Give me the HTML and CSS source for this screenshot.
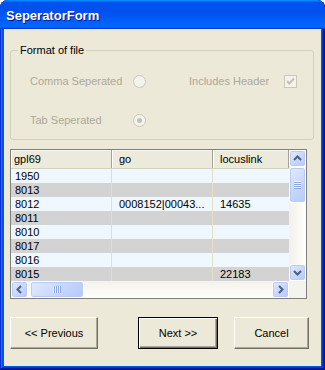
FILE: index.html
```html
<!DOCTYPE html>
<html>
<head>
<meta charset="utf-8">
<link rel="stylesheet" href="styles.css">
</head>
<body>
<div class="window">
  <div class="titlebar"><span class="title">SeperatorForm</span></div>
  <div class="frame">
    <div class="client">
      <fieldset class="group">
        <legend>Format of file</legend>
        <div class="options">
          <span class="lbl">Comma Seperated</span>
          <span class="radio"></span>
          <span></span>
          <span class="lbl">Includes Header</span>
          <span class="check"><svg width="11" height="11" viewBox="0 0 11 11"><path d="M2 5 L4.3 7.5 L9 2.5" fill="none" stroke="#c3c1b3" stroke-width="2"/></svg></span>
          <span class="lbl">Tab Seperated</span>
          <span class="radio on"><span class="dot"></span></span>
        </div>
      </fieldset>

      <div class="grid">
        <div class="table">
          <div class="row head"><div class="cell">gpl69</div><div class="cell">go</div><div class="cell">locuslink</div></div>
          <div class="row light"><div class="cell">1950</div><div class="cell"></div><div class="cell"></div></div>
          <div class="row dark"><div class="cell">8013</div><div class="cell"></div><div class="cell"></div></div>
          <div class="row light"><div class="cell">8012</div><div class="cell">0008152|00043...</div><div class="cell">14635</div></div>
          <div class="row dark"><div class="cell">8011</div><div class="cell"></div><div class="cell"></div></div>
          <div class="row light"><div class="cell">8010</div><div class="cell"></div><div class="cell"></div></div>
          <div class="row dark"><div class="cell">8017</div><div class="cell"></div><div class="cell"></div></div>
          <div class="row light"><div class="cell">8016</div><div class="cell"></div><div class="cell"></div></div>
          <div class="row dark"><div class="cell">8015</div><div class="cell"></div><div class="cell">22183</div></div>
        </div>
        <div class="vscroll">
          <span class="sbtn"><svg width="15" height="15" viewBox="0 0 15 15"><path d="M4 9 L7.5 5.5 L11 9" fill="none" stroke="#4d6185" stroke-width="2"/></svg></span>
          <span class="thumb vthumb"><svg width="15" height="8" viewBox="0 0 15 8"><path d="M4 0.5h7M4 2.5h7M4 4.5h7M4 6.5h7" stroke="#eef3fe" stroke-width="1"/><path d="M4 1.5h7M4 3.5h7M4 5.5h7M4 7.5h7" stroke="#8ca6e4" stroke-width="1"/></svg></span>
          <span class="track"></span>
          <span class="sbtn"><svg width="15" height="15" viewBox="0 0 15 15"><path d="M4 6 L7.5 9.5 L11 6" fill="none" stroke="#4d6185" stroke-width="2"/></svg></span>
        </div>
        <div class="hscroll">
          <span class="sbtn"><svg width="15" height="15" viewBox="0 0 15 15"><path d="M9 4 L5.5 7.5 L9 11" fill="none" stroke="#4d6185" stroke-width="2"/></svg></span>
          <span class="thumb hthumb"><svg width="8" height="15" viewBox="0 0 8 15"><path d="M0.5 4v7M2.5 4v7M4.5 4v7M6.5 4v7" stroke="#eef3fe" stroke-width="1"/><path d="M1.5 4v7M3.5 4v7M5.5 4v7M7.5 4v7" stroke="#8ca6e4" stroke-width="1"/></svg></span>
          <span class="track"></span>
          <span class="sbtn"><svg width="15" height="15" viewBox="0 0 15 15"><path d="M6 4 L9.5 7.5 L6 11" fill="none" stroke="#4d6185" stroke-width="2"/></svg></span>
        </div>
        <div class="corner"></div>
      </div>

      <div class="buttons">
        <button class="btn prev">&lt;&lt; Previous</button>
        <button class="btn next">Next &gt;&gt;</button>
        <button class="btn cancel">Cancel</button>
      </div>
    </div>
  </div>
</div>
</body>
</html>
```

FILE: styles.css
```css
html, body {
  margin: 0;
  padding: 0;
  background: #ffffff;
}

.window {
  width: 325px;
  height: 370px;
  box-sizing: border-box;
  display: flex;
  flex-direction: column;
  background: #0055e5;
  border-radius: 8px 8px 0 0;
  overflow: hidden;
  box-shadow: inset -1px -1px #00138c, inset 1px 1px #0831d9, inset -2px -2px #001ea0, inset 2px 2px #166aee, inset -3px -3px #003bda, inset 3px 3px #0855dd;
  font-family: "Liberation Sans", Arial, sans-serif;
  font-size: 11px;
  color: #000;
}

.titlebar {
  flex: none;
  height: 29px;
  box-sizing: border-box;
  padding: 2px 0 0 6px;
  display: flex;
  align-items: center;
  border-radius: 8px 8px 0 0;
  background: linear-gradient(180deg, #0997ff, #0053ee 8%, #0050ee 40%, #0066ff 88%, #0066ff 93%, #005bff 95%, #003dd7 96%, #003dd7);
}

.title {
  color: #fff;
  font-family: "Liberation Sans", Arial, sans-serif;
  font-weight: bold;
  font-size: 13px;
  letter-spacing: 0;
  text-shadow: 1px 1px #0f1089;
}

.frame {
  flex: 1;
  display: flex;
  padding: 0 4px 4px;
}

.client {
  flex: 1;
  background: #ece9d8;
  display: flex;
  flex-direction: column;
  align-items: flex-start;
  padding: 15px 0 0 6px;
}

/* group box */
.group {
  margin: 0;
  padding: 0;
  width: 304px;
  height: 96px;
  box-sizing: border-box;
  border: 1px solid #d0d0bf;
  border-radius: 3px;
}

.group legend {
  margin-left: 7px;
  padding: 0 2px;
  line-height: 13px;
  font-size: 11px;
  color: #000;
}

.options {
  display: grid;
  grid-template-columns: 103px 13px 43px 95px 13px;
  grid-auto-rows: 14px;
  row-gap: 25px;
  align-items: center;
  padding: 17px 0 0 19px;
}

.lbl {
  color: #aca899;
  white-space: nowrap;
  line-height: 14px;
}

.radio {
  width: 13px;
  height: 13px;
  box-sizing: border-box;
  border-radius: 50%;
  border: 1px solid #cac8bb;
  background: #f4f3ee;
  display: flex;
  align-items: center;
  justify-content: center;
}

.radio .dot {
  width: 5px;
  height: 5px;
  border-radius: 50%;
  background: #c3c1b3;
}

.check {
  width: 13px;
  height: 13px;
  box-sizing: border-box;
  border: 1px solid #cac8bb;
  background: #f4f3ee;
  display: flex;
}

/* data grid */
.grid {
  margin-top: 9px;
  width: 297px;
  height: 150px;
  box-sizing: border-box;
  border: 1px solid #7f7f7f;
  display: grid;
  grid-template-columns: 278px 17px;
  grid-template-rows: 131px 17px;
  background: #f4f3ee;
}

.table {
  overflow: hidden;
  background: #ffffff;
}

.row {
  display: grid;
  grid-template-columns: 101px 101px 76px;
  height: 14px;
  line-height: 14px;
}

.row .cell {
  white-space: nowrap;
  overflow: hidden;
  padding-left: 7px;
  border-right: 1px solid #e6dfc5;
}

.row .cell:first-child {
  padding-left: 4px;
}

.row .cell:last-child {
  border-right: 0;
}

.row.light {
  background: #f0f8ff;
}

.row.dark {
  background: #d3d3d3;
}

.row.head {
  height: 19px;
  line-height: 18px;
  box-sizing: border-box;
  background: #ebeadb;
  border-bottom: 1px solid #d5d2c2;
}

.row.head .cell {
  padding-left: 3px;
  border-right: 1px solid #a5a397;
  box-shadow: inset 1px 0 #ffffff, inset 0 1px #f7f6f0;
}

.row.head .cell + .cell {
  padding-left: 7px;
}

.vscroll, .hscroll {
  display: flex;
  background: linear-gradient(90deg, #f3f1ea, #fefefb);
}

.vscroll {
  flex-direction: column;
}

.hscroll {
  flex-direction: row;
  background: linear-gradient(180deg, #f3f1ea, #fefefb);
}

.track {
  flex: 1;
}

.sbtn, .thumb {
  flex: none;
  box-sizing: border-box;
  border: 1px solid #fff;
  border-radius: 3px;
  background: linear-gradient(135deg, #e3ebfe 0%, #c9d8fc 50%, #b5c9f8 100%);
  box-shadow: inset 0 0 0 1px #b8cbf5;
  display: flex;
  align-items: center;
  justify-content: center;
}

.sbtn {
  width: 17px;
  height: 17px;
}

.vthumb {
  width: 17px;
  height: 36px;
}

.hthumb {
  width: 54px;
  height: 17px;
  margin-left: 2px;
}

.corner {
  background: #f4f3ee;
}

/* buttons */
.buttons {
  margin-top: 18px;
  display: flex;
}

.btn {
  height: 32px;
  box-sizing: border-box;
  padding: 0;
  margin: 0;
  font-family: "Liberation Sans", Arial, sans-serif;
  font-size: 11px;
  color: #000;
  background: #ece9d8;
  border: 1px solid;
  border-color: #ffffff #716f64 #716f64 #ffffff;
  box-shadow: inset -1px -1px #aca899;
}

.prev {
  width: 88px;
}

.next {
  width: 80px;
  margin-left: 40px;
  border-color: #000;
  box-shadow: inset 1px 1px #ffffff, inset -1px -1px #716f64, inset -2px -2px #aca899;
}

.cancel {
  width: 75px;
  margin-left: 16px;
}
```
